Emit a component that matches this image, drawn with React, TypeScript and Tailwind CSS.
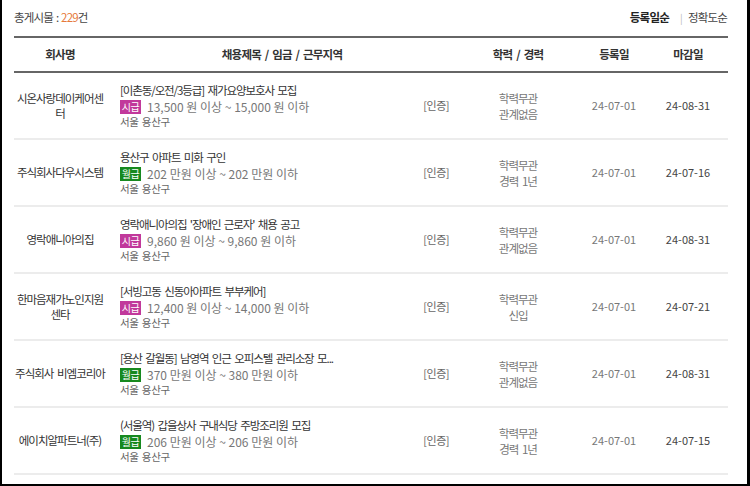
import React from 'react';

type Job = {
  company: string[];
  title: string;
  pay: 'hour' | 'month';
  salary: string;
  edu: string;
  career: string;
  reg: string;
  end: string;
};

const JOBS: Job[] = [
  { company: ['시온사랑데이케어센', '터'], title: '[이촌동/오전/3등급] 재가요양보호사 모집', pay: 'hour', salary: '13,500 원 이상 ~ 15,000 원 이하', edu: '학력무관', career: '관계없음', reg: '24-07-01', end: '24-08-31' },
  { company: ['주식회사다우시스템'], title: '용산구 아파트 미화 구인', pay: 'month', salary: '202 만원 이상 ~ 202 만원 이하', edu: '학력무관', career: '경력 1년', reg: '24-07-01', end: '24-07-16' },
  { company: ['영락애니아의집'], title: "영락애니아의집 '장애인 근로자' 채용 공고", pay: 'hour', salary: '9,860 원 이상 ~ 9,860 원 이하', edu: '학력무관', career: '관계없음', reg: '24-07-01', end: '24-08-31' },
  { company: ['한마음재가노인지원', '센타'], title: '[서빙고동 신동아아파트 부부케어]', pay: 'hour', salary: '12,400 원 이상 ~ 14,000 원 이하', edu: '학력무관', career: '신입', reg: '24-07-01', end: '24-07-21' },
  { company: ['주식회사 비엠코리아'], title: '[용산 갈월동] 남영역 인근 오피스텔 관리소장 모...', pay: 'month', salary: '370 만원 이상 ~ 380 만원 이하', edu: '학력무관', career: '관계없음', reg: '24-07-01', end: '24-08-31' },
  { company: ['에이치알파트너(주)'], title: '(서울역) 갑을상사 구내식당 주방조리원 모집', pay: 'month', salary: '206 만원 이상 ~ 206 만원 이하', edu: '학력무관', career: '경력 1년', reg: '24-07-01', end: '24-07-15' },
];

const font = { fontFamily: '"Noto Sans CJK KR", "Noto Sans", sans-serif' };

function PayBadge({ pay }: { pay: Job['pay'] }) {
  return pay === 'hour' ? (
    <span className="inline-flex items-center justify-center w-[21px] h-[14px] bg-[#c1399b] text-white text-[10px] tracking-[-0.5px] leading-none mr-[6px]">시급</span>
  ) : (
    <span className="inline-flex items-center justify-center w-[21px] h-[14px] bg-[#17891f] text-white text-[10px] tracking-[-0.5px] leading-none mr-[6px]">월급</span>
  );
}

export default function App() {
  return (
    <div style={font} className="w-[750px] h-[486px] bg-white border-l-2 border-r-[3px] border-b-2 border-black overflow-hidden">
      <div className="pl-3 w-[726px]">
        {/* top bar */}
        <div className="flex items-center justify-between h-[36px] pb-[1px] text-[11.5px] tracking-[-0.8px] [word-spacing:1px]">
          <div className="text-[#444]">
            총게시물 : <span className="text-[#e67a3c]">229</span>건
          </div>
          <div className="flex items-center pr-[1px]">
            <span className="text-[#222] font-bold">등록일순</span>
            <span className="ml-[11px] mr-[6px] text-[#bbb] text-[10px]">|</span>
            <span className="text-[#444]">정확도순</span>
          </div>
        </div>

        {/* header */}
        <div className="flex items-center h-[37px] border-t-2 border-b-2 border-[#666] text-[11.5px] tracking-[-0.8px] [word-spacing:2px] font-bold text-[#333] text-center">
          <div className="w-[92px]">회사명</div>
          <div className="w-[352px]">채용제목 / 임금 / 근무지역</div>
          <div className="w-[120px]">학력 / 경력</div>
          <div className="w-[72px]">등록일</div>
          <div className="w-[76px]">마감일</div>
        </div>

        {JOBS.map((j, i) => (
          <div key={i} className="flex items-center h-[67px] border-b-2 border-[#ececec]">
            <div className="w-[92px] text-center text-[#333] text-[11.5px] tracking-[-1px] [word-spacing:2px] leading-[15px] whitespace-nowrap">
              {j.company.map((c, k) => <div key={k}>{c}</div>)}
            </div>
            <div className="w-[352px] flex items-center pl-[14px] pr-[9px]">
              <div className="flex-1 min-w-0">
                <div className="text-[#333] text-[11.5px] tracking-[-1.1px] [word-spacing:2px] leading-[16px] whitespace-nowrap">{j.title}</div>
                <div className="flex items-center text-[#777] text-[12px] leading-[16px] mt-[1px]">
                  <PayBadge pay={j.pay} />
                  {j.salary}
                </div>
                <div className="text-[#666] text-[10.5px] tracking-[-0.3px] [word-spacing:1px] leading-[14px]">서울 용산구</div>
              </div>
              <div className="text-[#666] text-[11px] tracking-[-0.5px]">[인증]</div>
            </div>
            <div className="w-[120px] text-center text-[#777] text-[11.5px] tracking-[-1px] [word-spacing:2px] leading-[16px]">
              <div>{j.edu}</div>
              <div>{j.career}</div>
            </div>
            <div className="w-[72px] text-center text-[#777] text-[11px]">{j.reg}</div>
            <div className="w-[76px] text-center text-[#444] text-[11px]">{j.end}</div>
          </div>
        ))}
      </div>
    </div>
  );
}
